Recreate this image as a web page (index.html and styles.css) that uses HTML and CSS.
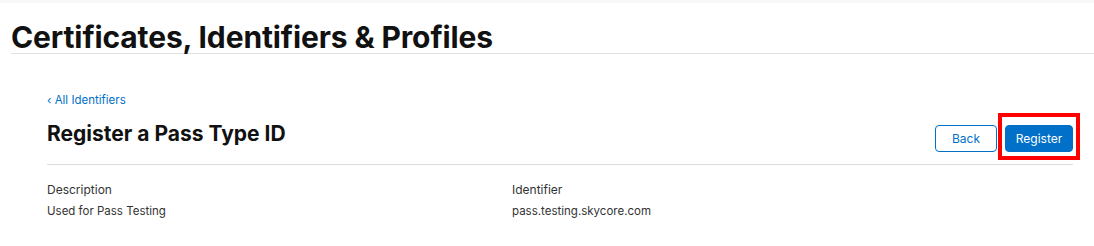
FILE: index.html
```html
<!DOCTYPE html>
<html>
<head>
<meta charset="utf-8">
<link rel="stylesheet" href="styles.css">
</head>
<body>
<div class="topstrip"></div>
<header class="page-header">
  <h1 class="page-title">Certificates, Identifiers &amp; Profiles</h1>
</header>
<main class="content">
  <a class="back-link" href="#">&lsaquo; All Identifiers</a>
  <div class="title-row">
    <h2 class="section-title">Register a Pass Type ID</h2>
    <div class="actions">
      <button class="btn btn-secondary">Back</button>
      <span class="highlight">
        <button class="btn btn-primary">Register</button>
      </span>
    </div>
  </div>
  <div class="details">
    <div class="field">
      <div class="field-label">Description</div>
      <div class="field-value">Used for Pass Testing</div>
    </div>
    <div class="field">
      <div class="field-label">Identifier</div>
      <div class="field-value">pass.testing.skycore.com</div>
    </div>
  </div>
</main>
</body>
</html>
```

FILE: styles.css
```css
html, body {
  margin: 0;
  padding: 0;
  background: #fff;
}
body {
  font-family: Inter, "Liberation Sans", sans-serif;
  color: #111;
}
.topstrip {
  height: 3px;
  background: #f7f7f7;
}
.page-header {
  margin-left: 11px;
  border-bottom: 1px solid #e1e1e1;
  height: 51px;
  box-sizing: border-box;
}
.page-title {
  margin: 0;
  padding-top: 16px;
  font-size: 30px;
  line-height: 36px;
  font-weight: 700;
  letter-spacing: -0.12px;
  color: #111;
}
.content {
  margin: 0 21px 0 47px;
}
.back-link {
  display: block;
  margin-top: 39px;
  font-size: 11.5px;
  line-height: 14px;
  color: #0070c9;
  text-decoration: none;
}
.title-row {
  display: flex;
  align-items: center;
  justify-content: space-between;
  border-bottom: 1px solid #dcdcdc;
  height: 58px;
  box-sizing: border-box;
}
.section-title {
  margin: 0;
  font-size: 21px;
  line-height: 26px;
  font-weight: 700;
  color: #111;
  padding-bottom: 3px;
}
.actions {
  display: flex;
  align-items: center;
  gap: 8px;
  margin-top: 6px;
}
.btn {
  font-family: Inter, "Liberation Sans", sans-serif;
  font-size: 12px;
  height: 27px;
  border-radius: 4px;
  box-sizing: border-box;
  cursor: pointer;
}
.btn-secondary {
  width: 62px;
  background: #fff;
  color: #0070c9;
  border: 1px solid #0070c9;
}
.btn-primary {
  width: 68px;
  background: #0070c9;
  color: #fff;
  border: 1px solid #0070c9;
}
.highlight {
  position: relative;
  display: inline-flex;
}
.highlight::after {
  content: "";
  position: absolute;
  left: -7px;
  right: -7px;
  top: -12px;
  bottom: -8px;
  border: 4px solid #f00;
  pointer-events: none;
}
.details {
  display: grid;
  grid-template-columns: 465px 1fr;
  padding-top: 17px;
}
.field-label {
  font-size: 12px;
  line-height: 16px;
  color: #333;
}
.field-value {
  margin-top: 5px;
  font-size: 11.5px;
  line-height: 16px;
  color: #333;
}
```
